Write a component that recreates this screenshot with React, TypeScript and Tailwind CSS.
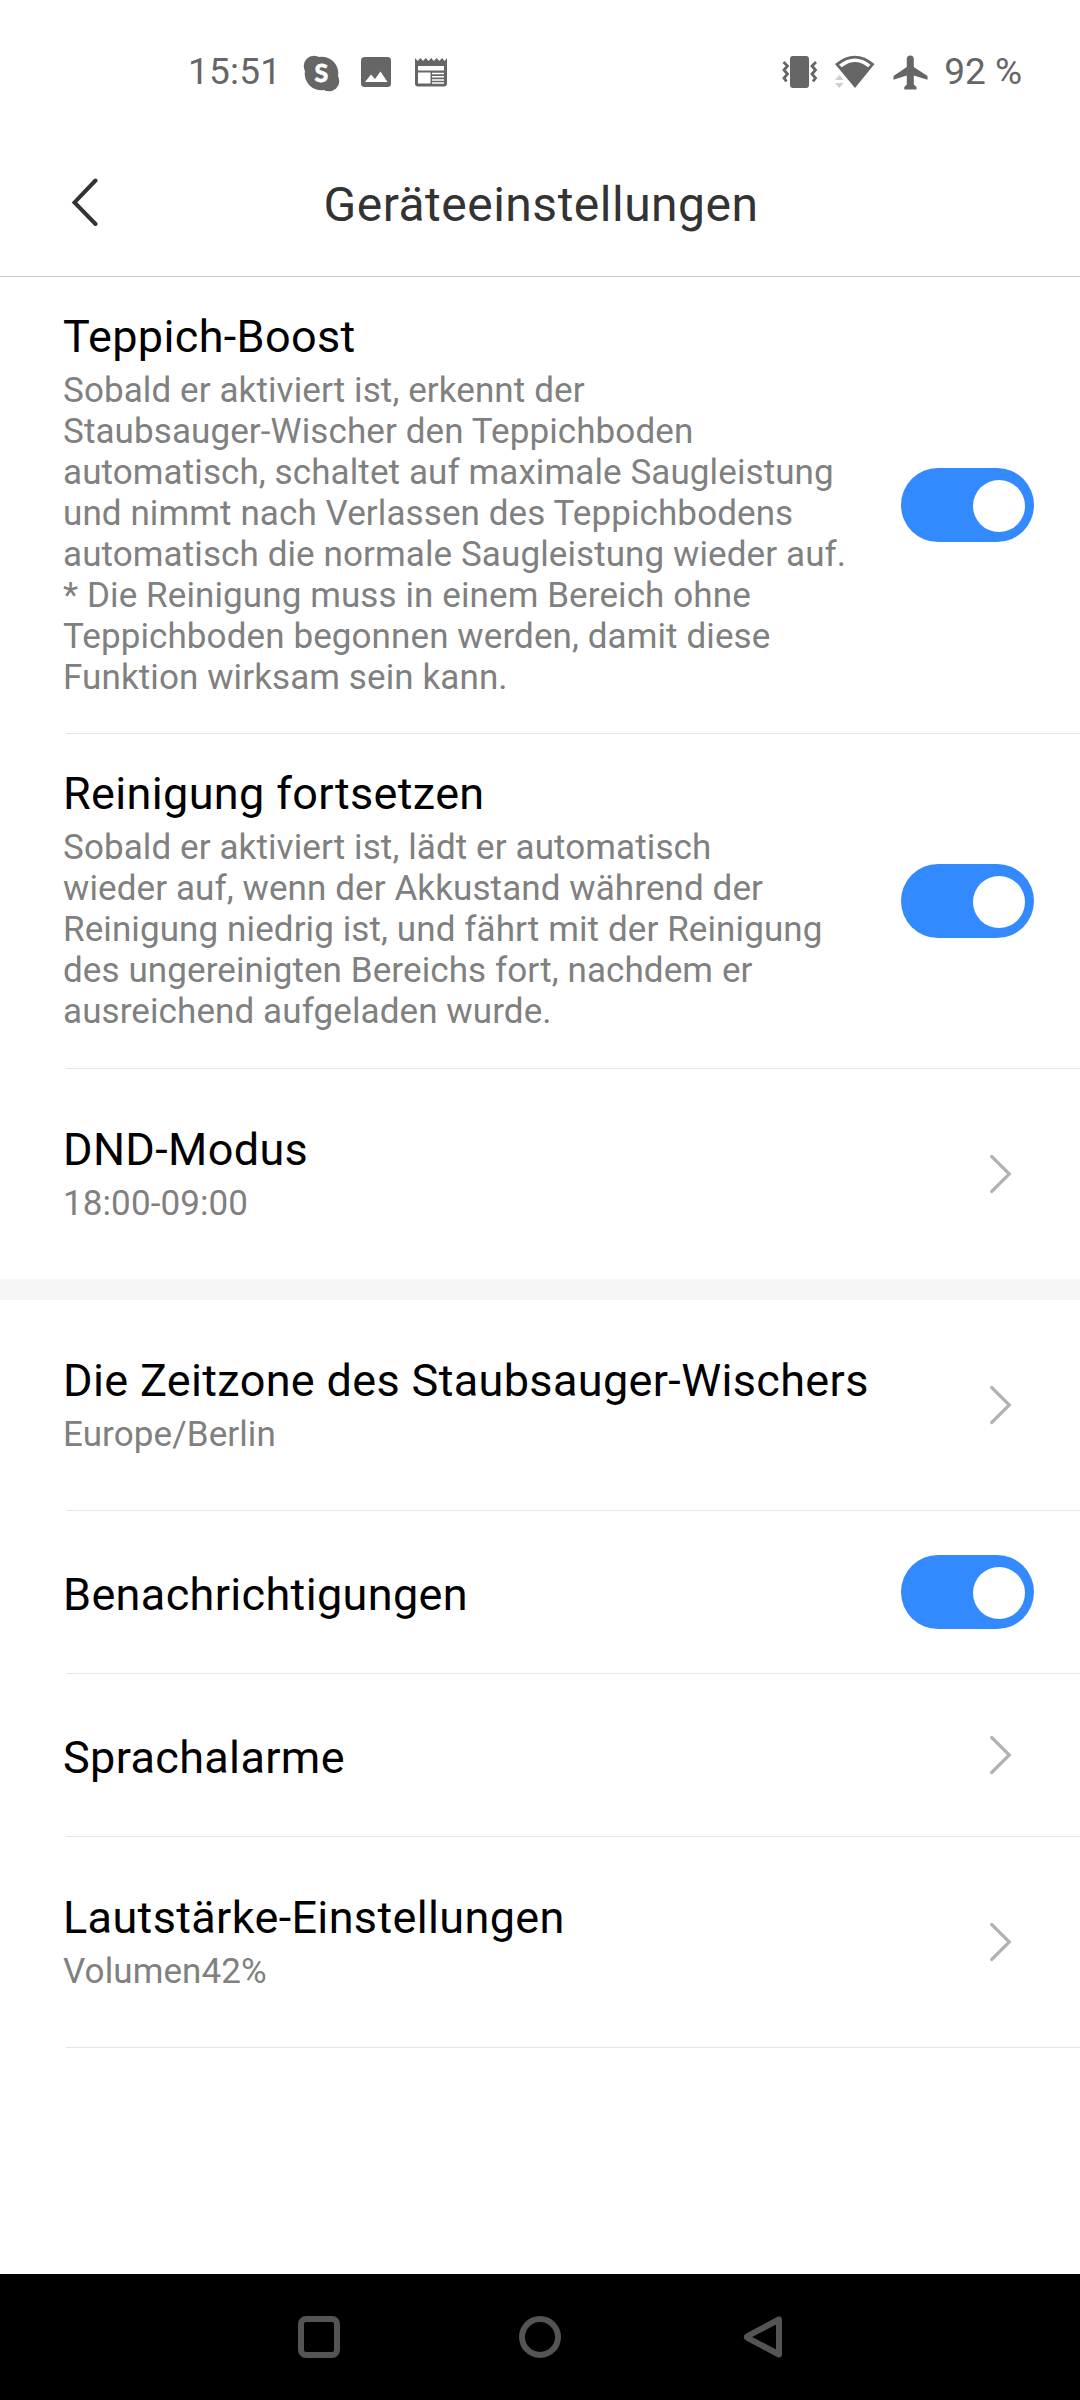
import type { ReactNode } from "react"

interface SettingRowProps {
  title: string
  description?: ReactNode
  control: "toggle" | "chevron"
  className: string
  divider?: boolean
}

function StatusBar() {
  return (
    <div className="flex h-[144px] items-start justify-between pt-[50px] pl-[188px] pr-[58px] text-[#666666]">
      <div className="flex h-[44px] items-center">
        <span className="w-[115px] text-[37px] leading-[44px] tracking-[0.2px]">15:51</span>
        {/* Skype */}
        <svg className="mt-[2px] h-[37px] w-[37px]" viewBox="0 0 37 37">
          <circle cx="18.5" cy="18.5" r="16.8" fill="currentColor" />
          <circle cx="11" cy="11" r="10.3" fill="currentColor" />
          <circle cx="26" cy="26" r="10.3" fill="currentColor" />
          <text
            x="18.3"
            y="27.2"
            textAnchor="middle"
            fill="#fff"
            stroke="#fff"
            strokeWidth="0.8"
            strokeLinejoin="round"
            className="font-['Lato',sans-serif] text-[25px] font-bold"
          >
            S
          </text>
        </svg>
        {/* Picture notification */}
        <svg className="ml-[21px] h-[30px] w-[30px]" viewBox="0 0 30 30">
          <rect width="30" height="30" rx="3.5" fill="currentColor" />
          <path d="M4 25 L10 17.5 L14 22 L19.5 14.5 L26.5 25 Z" fill="#fff" />
        </svg>
        {/* News notification */}
        <svg className="ml-[23px] h-[30px] w-[34px]" viewBox="0 0 34 30">
          <path
            d="M1 1 L3.7 4 L6.4 1 L9.1 4 L11.8 1 L14.5 4 L17.2 1 L19.9 4 L22.6 1 L25.3 4 L28 1 L30.7 4 L33 1 V26.5 Q33 29.5 30 29.5 H4 Q1 29.5 1 26.5 Z"
            fill="currentColor"
          />
          <path d="M4 9 H30 V13.5 H4 Z M4 15.5 H16.5 V26.5 H4 Z" fill="#fff" />
          <path d="M18 16.5 H30 M18 19.8 H30 M18 23.1 H30 M18 26 H30" stroke="#fff" strokeWidth="1.5" />
        </svg>
      </div>
      <div className="flex h-[44px] items-center">
        {/* Vibrate */}
        <svg className="h-[32px] w-[36px]" viewBox="0 0 36 32">
          <rect x="8" y="0" width="19" height="32" rx="3" fill="currentColor" />
          <path
            d="M1.5 5.5 L5.5 9.5 L2 13.5 L5.5 17.5 L2 21.5 L4.5 25 M34 5.5 L30 9.5 L33.5 13.5 L30 17.5 L33.5 21.5 L31 25"
            transform="translate(0 .5)"
            fill="none"
            stroke="currentColor"
            strokeWidth="2.8"
          />
        </svg>
        {/* Wifi */}
        <svg className="ml-[17px] h-[34px] w-[40px]" viewBox="0 0 40 34">
          <path d="M0 9 Q20 -7.5 39.5 9 L20 33 Z" fill="currentColor" />
          <path d="M4 9.7 Q20 -2.5 35.5 9.7 L33 12.2 Q20 1.8 6.8 12.2 Z" fill="#fff" />
          <path d="M0 25 L4.3 20 L8.6 25 Z M0 28 L4.3 33 L8.6 28 Z" fill="#cfcfcf" />
        </svg>
        {/* Airplane */}
        <svg className="ml-[18px] h-[35px] w-[35px]" viewBox="0 0 35 35">
          <path
            d="M13.8 4 Q13.8 .5 17.2 .5 Q20.8 .5 20.8 4 V12 L34.5 21 V24.8 L20.8 20.5 V29.5 L23.5 32 V34.5 H11.3 V32 L13.8 29.5 V20.5 L.5 24.8 V21 L13.8 12 Z"
            fill="currentColor"
          />
        </svg>
        <span className="ml-[16px] text-[37px] leading-[44px]">92 %</span>
      </div>
    </div>
  )
}

function Header() {
  return (
    <header className="relative flex h-[133px] items-center justify-center border-b border-[#cccccc] pb-[11px] pl-[2px]">
      <svg className="absolute top-[34px] left-[71px] h-[49px] w-[28px]" viewBox="0 0 28 49" aria-label="Zurück">
        <path d="M24.5 2.5 L3.5 24.4 L24.5 46" fill="none" stroke="#333" strokeWidth="4" strokeLinecap="round" />
      </svg>
      <h1 className="text-[48px] leading-[58px] tracking-[0.5px] text-[#333333]">Geräteeinstellungen</h1>
    </header>
  )
}

function Toggle() {
  return (
    <div className="flex h-[74px] w-[133px] shrink-0 items-center justify-end rounded-full bg-[#338aff] pt-[2px] pr-[9px]">
      <div className="size-[52px] rounded-full bg-white" />
    </div>
  )
}

function Chevron() {
  return (
    <svg className="mr-[22px] h-[40px] w-[24px] shrink-0" viewBox="0 0 24 40">
      <path d="M3.7 2.5 L21.3 20 L3.7 37.5" fill="none" stroke="#b2b2b2" strokeWidth="3.2" strokeLinecap="round" />
    </svg>
  )
}

function SettingRow({ title, description, control, className, divider = true }: SettingRowProps) {
  const textPadding = !description ? "pt-[5px]" : control === "toggle" ? "pb-[3px]" : "pb-px"

  return (
    <div className={className}>
      <div className="flex min-h-0 flex-1 items-center justify-between pr-[46px] pl-[63px]">
        <div className={`whitespace-nowrap ${textPadding}`}>
          <h2 className="text-[45px] leading-[53px] tracking-[0.35px] text-black">{title}</h2>
          {description && (
            <p className="pt-[7px] text-[35px] leading-[41px] tracking-[0.1px] text-[#808080]">{description}</p>
          )}
        </div>
        {control === "toggle" ? <Toggle /> : <Chevron />}
      </div>
      {divider && <div className="ml-[66px] h-px bg-[#e5e5e5]" />}
    </div>
  )
}

function NavigationBar() {
  return (
    <nav className="flex h-[126px] items-center justify-between bg-black pr-[297px] pl-[298px]">
      <div className="size-[42px] rounded-[8px] border-[6px] border-[#545454]" />
      <div className="mr-px size-[42px] rounded-full border-[6px] border-[#545454]" />
      <svg className="size-[42px]" viewBox="-2 0 42 42">
        <path d="M36 3.5 V38.5 L4.5 21.8 Q3 21 4.5 20.2 Z" fill="none" stroke="#545454" strokeWidth="6" strokeLinejoin="round" />
      </svg>
    </nav>
  )
}

export default function App() {
  return (
    <div className="flex h-[2400px] w-[1080px] flex-col overflow-hidden bg-white font-['Roboto',sans-serif]">
      <StatusBar />
      <Header />
      <main className="flex-1">
        <SettingRow
          className="flex h-[457px] flex-col"
          title="Teppich-Boost"
          control="toggle"
          description={
            <>
              Sobald er aktiviert ist, erkennt der<br />
              Staubsauger-Wischer den Teppichboden<br />
              automatisch, schaltet auf maximale Saugleistung<br />
              und nimmt nach Verlassen des Teppichbodens<br />
              automatisch die normale Saugleistung wieder auf.<br />
              * Die Reinigung muss in einem Bereich ohne<br />
              Teppichboden begonnen werden, damit diese<br />
              Funktion wirksam sein kann.
            </>
          }
        />
        <SettingRow
          className="flex h-[335px] flex-col"
          title="Reinigung fortsetzen"
          control="toggle"
          description={
            <>
              Sobald er aktiviert ist, lädt er automatisch<br />
              wieder auf, wenn der Akkustand während der<br />
              Reinigung niedrig ist, und fährt mit der Reinigung<br />
              des ungereinigten Bereichs fort, nachdem er<br />
              ausreichend aufgeladen wurde.
            </>
          }
        />
        <SettingRow
          className="flex h-[210px] flex-col"
          title="DND-Modus"
          description="18:00-09:00"
          control="chevron"
          divider={false}
        />
        <div className="h-[21px] bg-[#f6f6f6]" />
        <SettingRow
          className="flex h-[211px] flex-col"
          title="Die Zeitzone des Staubsauger-Wischers"
          description="Europe/Berlin"
          control="chevron"
        />
        <SettingRow className="flex h-[163px] flex-col" title="Benachrichtigungen" control="toggle" />
        <SettingRow className="flex h-[163px] flex-col" title="Sprachalarme" control="chevron" />
        <SettingRow
          className="flex h-[211px] flex-col"
          title="Lautstärke-Einstellungen"
          description="Volumen42%"
          control="chevron"
        />
      </main>
      <NavigationBar />
    </div>
  )
}
